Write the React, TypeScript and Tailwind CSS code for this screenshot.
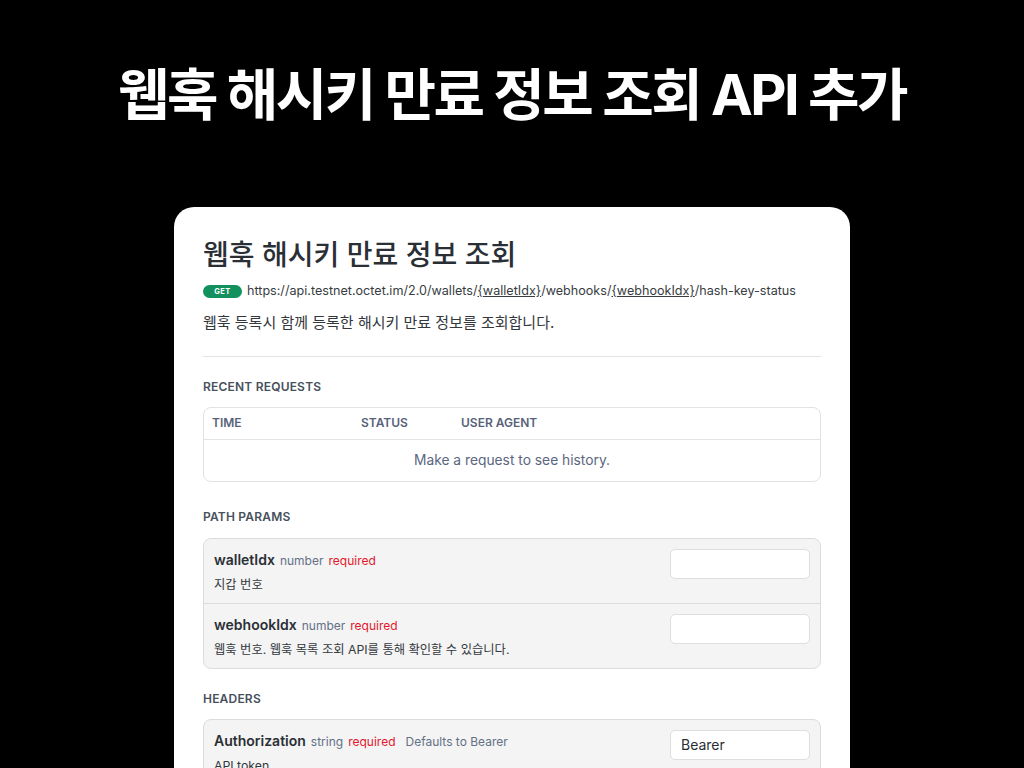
import React from 'react';

const font = { fontFamily: 'Inter, "Noto Sans CJK KR", sans-serif' };

interface Param {
  name: string;
  type: string;
  desc: string;
  defaults?: string;
  value?: string;
}

const ParamRow: React.FC<{ p: Param; last?: boolean }> = ({ p, last }) => (
  <div className={`flex items-start justify-between px-[10px] pt-[10px] pb-[9px] ${last ? '' : 'border-b border-[#dcdcdc]'}`}>
    <div className="pt-[1px]">
      <div className="flex items-baseline leading-[20px]">
        <span className="text-[14px] font-semibold text-[#2a2f35]">{p.name}</span>
        <span className="ml-[5px] text-[12px] text-[#637085]">{p.type}</span>
        <span className="ml-[5px] text-[12px] text-[#e3172c]">required</span>
        {p.defaults && <span className="ml-[10px] text-[12px] text-[#637085]">Defaults to {p.defaults}</span>}
      </div>
      <div className="mt-[5px] text-[12.3px] leading-[18px] text-[#33383d]">{p.desc}</div>
    </div>
    <div className="w-[140px] h-[30px] bg-white border border-[#dedede] rounded-[5px] px-[10px] flex items-center text-[14px] text-[#2a2f35]">
      {p.value}
    </div>
  </div>
);

const SectionLabel: React.FC<{ children: React.ReactNode }> = ({ children }) => (
  <div className="text-[12px] font-semibold text-[#47505c] tracking-[0.2px]">{children}</div>
);

export default function App() {
  return (
    <div className="w-[1024px] h-[768px] bg-black overflow-hidden flex flex-col items-center" style={font}>
      <h1 className="mt-[62px] text-[56px] leading-[66px] font-bold text-white tracking-[-2.5px]">
        웹훅 해시키 만료 정보 조회 API 추가
      </h1>

      <div className="mt-[79px] w-[676px] bg-white rounded-[20px] px-[29px] pt-[30px] pb-[40px]">
        <h2 className="text-[28px] leading-[36px] font-medium text-[#2a2f35]">웹훅 해시키 만료 정보 조회</h2>
        <div className="mt-[9px] flex items-center">
          <span className="w-[39px] h-[13px] rounded-full bg-[#12915f] text-white text-[7.5px] font-bold flex items-center justify-center tracking-[0.5px]">
            GET
          </span>
          <span className="ml-[5px] text-[12.6px] text-[#383d42]">
            https://api.testnet.octet.im/2.0/wallets/<span className="underline">{'{walletIdx}'}</span>/webhooks/
            <span className="underline">{'{webhookIdx}'}</span>/hash-key-status
          </span>
        </div>
        <p className="mt-[12px] text-[15px] leading-[20px] text-[#33383d]">웹훅 등록시 함께 등록한 해시키 만료 정보를 조회합니다.</p>

        <div className="mt-[23px] border-t border-[#e3e3e3]" />

        <div className="mt-[21px]">
          <SectionLabel>RECENT REQUESTS</SectionLabel>
        </div>
        <div className="mt-[11px] border border-[#e3e3e3] rounded-[8px]">
          <div className="flex h-[32px] items-center px-[8px] text-[12px] font-semibold text-[#57627a] border-b border-[#e3e3e3]">
            <div className="w-[149px]">TIME</div>
            <div className="w-[100px]">STATUS</div>
            <div>USER AGENT</div>
          </div>
          <div className="h-[41px] flex items-center justify-center text-[13.8px] text-[#5b6680]">
            Make a request to see history.
          </div>
        </div>

        <div className="mt-[26px]">
          <SectionLabel>PATH PARAMS</SectionLabel>
        </div>
        <div className="mt-[12px] bg-[#f4f4f4] border border-[#dcdcdc] rounded-[8px]">
          <ParamRow p={{ name: 'walletIdx', type: 'number', desc: '지갑 번호' }} />
          <ParamRow last p={{ name: 'webhookIdx', type: 'number', desc: '웹훅 번호. 웹훅 목록 조회 API를 통해 확인할 수 있습니다.' }} />
        </div>

        <div className="mt-[21px]">
          <SectionLabel>HEADERS</SectionLabel>
        </div>
        <div className="mt-[11px] bg-[#f4f4f4] border border-[#dcdcdc] rounded-[8px]">
          <ParamRow last p={{ name: 'Authorization', type: 'string', desc: 'API token', defaults: 'Bearer', value: 'Bearer' }} />
        </div>
      </div>
    </div>
  );
}
